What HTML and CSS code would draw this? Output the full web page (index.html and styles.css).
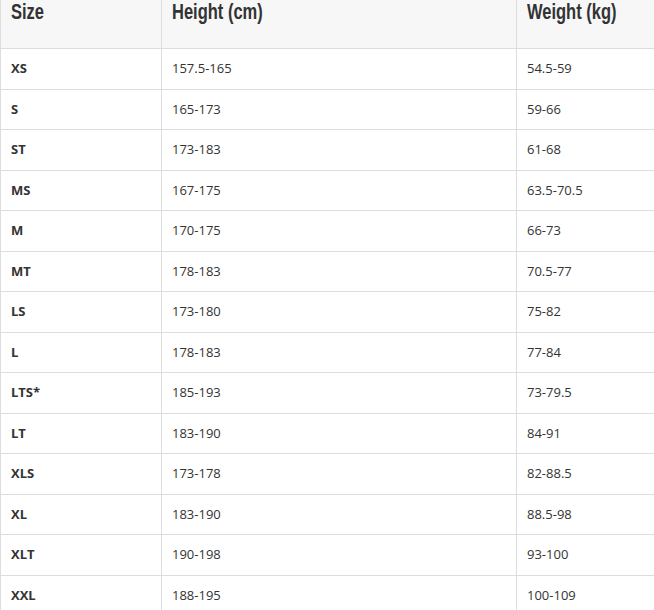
FILE: index.html
```html
<!DOCTYPE html>
<html>
<head>
<meta charset="utf-8">
<link rel="stylesheet" href="styles.css">
</head>
<body>
<table class="size-table">
  <colgroup>
    <col class="c1"><col class="c2"><col class="c3">
  </colgroup>
  <thead>
    <tr><th><span class="hd">Size</span></th><th><span class="hd">Height (cm)</span></th><th><span class="hd">Weight (kg)</span></th></tr>
  </thead>
  <tbody>
    <tr><td class="sz">XS</td><td>157.5-165</td><td>54.5-59</td></tr>
    <tr><td class="sz">S</td><td>165-173</td><td>59-66</td></tr>
    <tr><td class="sz">ST</td><td>173-183</td><td>61-68</td></tr>
    <tr><td class="sz">MS</td><td>167-175</td><td>63.5-70.5</td></tr>
    <tr><td class="sz">M</td><td>170-175</td><td>66-73</td></tr>
    <tr><td class="sz">MT</td><td>178-183</td><td>70.5-77</td></tr>
    <tr><td class="sz">LS</td><td>173-180</td><td>75-82</td></tr>
    <tr><td class="sz">L</td><td>178-183</td><td>77-84</td></tr>
    <tr><td class="sz">LTS*</td><td>185-193</td><td>73-79.5</td></tr>
    <tr><td class="sz">LT</td><td>183-190</td><td>84-91</td></tr>
    <tr><td class="sz">XLS</td><td>173-178</td><td>82-88.5</td></tr>
    <tr><td class="sz">XL</td><td>183-190</td><td>88.5-98</td></tr>
    <tr><td class="sz">XLT</td><td>190-198</td><td>93-100</td></tr>
    <tr><td class="sz">XXL</td><td>188-195</td><td>100-109</td></tr>
  </tbody>
</table>
</body>
</html>
```
FILE: styles.css
```css
html, body {
  margin: 0;
  padding: 0;
  background: #fff;
  overflow: hidden;
}
.size-table {
  border-collapse: collapse;
  table-layout: fixed;
  width: 680px;
  font-family: "Open Sans", sans-serif;
  font-size: 13px;
  line-height: 19.5px;
  color: #333;
}
.c1 { width: 161px; }
.c2 { width: 355px; }
.c3 { width: 164px; }
.size-table th,
.size-table td {
  border: 1px solid #dddddd;
  text-align: left;
  padding: 10px 10px;
  vertical-align: middle;
}
.size-table thead th {
  background: #f7f7f7;
  font-family: "Liberation Sans", Arial, sans-serif;
  font-weight: bold;
  font-size: 22px;
  line-height: 24px;
  color: #333;
  height: 48.5px;
  box-sizing: border-box;
  padding: 0 10px 24px;
  vertical-align: top;
  border-top: 0;
}
.hd {
  display: inline-block;
  transform: scaleX(0.75);
  transform-origin: left center;
  white-space: nowrap;
}
.size-table .sz {
  font-weight: bold;
}
```
